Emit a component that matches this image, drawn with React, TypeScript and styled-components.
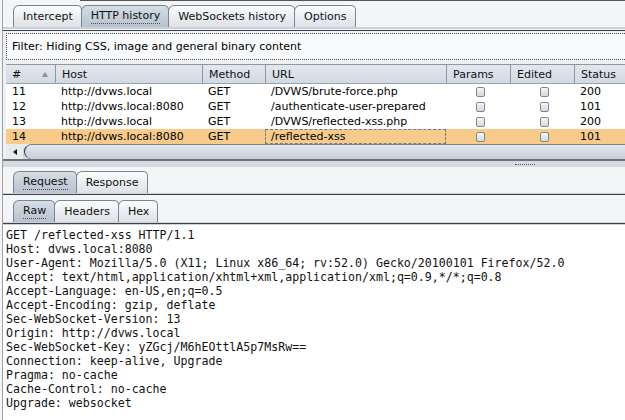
import React from 'react';
import styled, { createGlobalStyle, css } from 'styled-components';

const Global = createGlobalStyle`
  html, body { margin: 0; padding: 0; background: #f4f5f6; }
  body { font-family: "DejaVu Sans", "Liberation Sans", sans-serif; font-size: 11px; color: #000; }
`;

const Window = styled.div`
  width: 623px;
  height: 420px;
  margin-left: 2px;
  border-left: 1px solid #9aa1a8;
  box-sizing: border-box;
  overflow: hidden;
  display: flex;
  flex-direction: column;
  background: #f4f5f6;
`;

const TopEdge = styled.div`
  height: 1px;
  flex: none;
  background: linear-gradient(to right, transparent 77px, #555 77px);
`;

const TabRow = styled.div<{ $h: number; $pad: number }>`
  display: flex;
  align-items: flex-end;
  height: ${p => p.$h}px;
  padding-left: ${p => p.$pad}px;
  flex: none;
`;

const Tab = styled.div<{ $active?: boolean; $h: number }>`
  height: ${p => p.$h}px;
  padding: 0 8px 0 9px;
  display: flex;
  align-items: center;
  box-sizing: border-box;
  border: 1px solid #7b8590;
  border-bottom: none;
  border-radius: 6px 5px 0 0;
  margin-right: -1px;
  background: linear-gradient(#fbfcfd, #e9ecef 60%, #dde1e6);
  color: #111;
  white-space: nowrap;
  ${p => p.$active && css`
    background: linear-gradient(#d5dde5, #c3cdd8 60%, #b8c3cf);
  `}
`;

const TabLabel = styled.span<{ $focus?: boolean }>`
  padding-bottom: 1px;
  ${p => p.$focus && css`border-bottom: 1px dotted #4a5058;`}
`;

const TabBaseline = styled.div`
  flex: none;
  height: 1px;
  border-top: 2px solid #c9d2dc;
  border-bottom: 1px solid #3e4246;
`;

const ProxyPane = styled.div`
  flex: none;
  padding: 2px 0 0 3px;
  display: flex;
  flex-direction: column;
  background: #eef0f2;
`;

const FilterBar = styled.div`
  height: 27px;
  box-sizing: border-box;
  border: 1px dotted #4b4f55;
  background: #f9fafb;
  display: flex;
  align-items: center;
  padding-left: 5px;
  margin-right: -4px;
`;

const Table = styled.div`
  margin-top: 4px;
  display: flex;
  flex-direction: column;
  border-top: 1px solid #8d98a4;
`;

const Grid = styled.div<{ $head?: boolean; $sel?: boolean }>`
  display: grid;
  grid-template-columns: 49px 147px 63px 181px 64px 64px 1fr;
  height: 15px;
  align-items: center;
  background: #fff;
  ${p => p.$sel && css`background: #f8cb8a;`}
  ${p => p.$head && css`
    height: 19px;
    background: linear-gradient(#e3e8ed, #d2d9e1);
    border-bottom: 1px solid #9aa4ae;
    box-sizing: border-box;
  `}
`;

const HeadCell = styled.div<{ $first?: boolean }>`
  height: 100%;
  display: flex;
  align-items: center;
  justify-content: space-between;
  padding: 0 6px 0 6px;
  box-sizing: border-box;
  color: #111;
  border-left: ${p => (p.$first ? 'none' : '1px solid #8e98a3')};
`;

const SortArrow = styled.span`
  width: 0;
  height: 0;
  border-left: 3px solid transparent;
  border-right: 3px solid transparent;
  border-bottom: 5px solid #8b9097;
  margin-right: 1px;
`;

const Cell = styled.div<{ $focus?: boolean; $center?: boolean }>`
  height: 100%;
  display: flex;
  align-items: center;
  padding-left: 6px;
  box-sizing: border-box;
  white-space: nowrap;
  overflow: hidden;
  ${p => p.$center && css`justify-content: center; padding-left: 4px;`}
  ${p => p.$focus && css`border: 1px dashed #6b7f93; padding-left: 5px;`}
`;

const Check = styled.span`
  width: 9px;
  height: 10px;
  box-sizing: border-box;
  border: 1px solid #7f8892;
  border-radius: 2px;
  background: linear-gradient(#f6f7f9, #d3d9df);
`;

const HScroll = styled.div`
  display: flex;
  height: 15px;
  background: linear-gradient(#e9ecf0 0, #e9ecf0 3px, #d3dae2 4px, #c6cfd9 10px, #d6dce3 15px);
`;

const ScrollArrow = styled.div`
  width: 17px;
  display: flex;
  align-items: center;
  justify-content: center;
  background: #e8ebee;
  &::before {
    content: "";
    border-top: 3px solid transparent;
    border-bottom: 3px solid transparent;
    border-right: 4px solid #111;
  }
`;

const ScrollThumb = styled.div`
  flex: 1;
  margin-left: 1px;
  border-left: 1px solid #333;
  border-top: 1px solid #7a8088;
  border-radius: 9px 0 0 9px;
  background: linear-gradient(#e4e8ec, #d0d8e0 60%, #c6cfd8);
`;

const PaneEdge = styled.div`
  height: 2px;
  background: #6e7276;
  flex: none;
`;

const Splitter = styled.div`
  height: 6px;
  flex: none;
  background: #d5dbe1;
  display: flex;
  align-items: center;
  padding-left: 512px;
`;

const Grip = styled.span`
  width: 20px;
  height: 0;
  border-top: 1px dotted #55606b;
`;

const EditorBaseline = styled.div`
  flex: none;
  height: 0;
  border-top: 1px solid #c9d2dc;
  border-bottom: 1px solid #3e4246;
`;

const TextArea = styled.pre`
  flex: 1;
  margin: 0;
  padding: 3px 0 0 3px;
  background: #fff;
  font-family: "DejaVu Sans Mono", "Liberation Mono", monospace;
  font-size: 11.6px;
  line-height: 14px;
  color: #111;
  border-top: 1px solid #c9d2dc;
`;

const rows = [
  { n: '11', host: 'http://dvws.local', m: 'GET', url: '/DVWS/brute-force.php', s: '200' },
  { n: '12', host: 'http://dvws.local:8080', m: 'GET', url: '/authenticate-user-prepared', s: '101' },
  { n: '13', host: 'http://dvws.local', m: 'GET', url: '/DVWS/reflected-xss.php', s: '200' },
  { n: '14', host: 'http://dvws.local:8080', m: 'GET', url: '/reflected-xss', s: '101', sel: true },
];

const request = `GET /reflected-xss HTTP/1.1
Host: dvws.local:8080
User-Agent: Mozilla/5.0 (X11; Linux x86_64; rv:52.0) Gecko/20100101 Firefox/52.0
Accept: text/html,application/xhtml+xml,application/xml;q=0.9,*/*;q=0.8
Accept-Language: en-US,en;q=0.5
Accept-Encoding: gzip, deflate
Sec-WebSocket-Version: 13
Origin: http://dvws.local
Sec-WebSocket-Key: yZGcj/M6hEOttlA5p7MsRw==
Connection: keep-alive, Upgrade
Pragma: no-cache
Cache-Control: no-cache
Upgrade: websocket`;

export default function App() {
  return (
    <Window>
      <Global />
      <TopEdge />
      <TabRow $h={26} $pad={10}>
        <Tab $h={22}><TabLabel>Intercept</TabLabel></Tab>
        <Tab $h={22} $active><TabLabel $focus>HTTP history</TabLabel></Tab>
        <Tab $h={22}><TabLabel>WebSockets history</TabLabel></Tab>
        <Tab $h={22}><TabLabel>Options</TabLabel></Tab>
      </TabRow>
      <TabBaseline />
      <ProxyPane>
        <FilterBar>Filter: Hiding CSS, image and general binary content</FilterBar>
        <Table>
          <Grid $head>
            <HeadCell $first># <SortArrow /></HeadCell>
            <HeadCell>Host</HeadCell>
            <HeadCell>Method</HeadCell>
            <HeadCell>URL</HeadCell>
            <HeadCell>Params</HeadCell>
            <HeadCell>Edited</HeadCell>
            <HeadCell>Status</HeadCell>
          </Grid>
          {rows.map(r => (
            <Grid key={r.n} $sel={r.sel}>
              <Cell>{r.n}</Cell>
              <Cell>{r.host}</Cell>
              <Cell>{r.m}</Cell>
              <Cell $focus={r.sel}>{r.url}</Cell>
              <Cell $center><Check /></Cell>
              <Cell $center><Check /></Cell>
              <Cell>{r.s}</Cell>
            </Grid>
          ))}
          <HScroll>
            <ScrollArrow />
            <ScrollThumb />
          </HScroll>
        </Table>
      </ProxyPane>
      <PaneEdge />
      <Splitter><Grip /></Splitter>
      <TabRow $h={26} $pad={10}>
        <Tab $h={22} $active><TabLabel $focus>Request</TabLabel></Tab>
        <Tab $h={22}><TabLabel>Response</TabLabel></Tab>
      </TabRow>
      <EditorBaseline />
      <TabRow $h={27} $pad={10}>
        <Tab $h={22} $active><TabLabel $focus>Raw</TabLabel></Tab>
        <Tab $h={22}><TabLabel>Headers</TabLabel></Tab>
        <Tab $h={22}><TabLabel>Hex</TabLabel></Tab>
      </TabRow>
      <EditorBaseline />
      <TextArea>{request}</TextArea>
    </Window>
  );
}
